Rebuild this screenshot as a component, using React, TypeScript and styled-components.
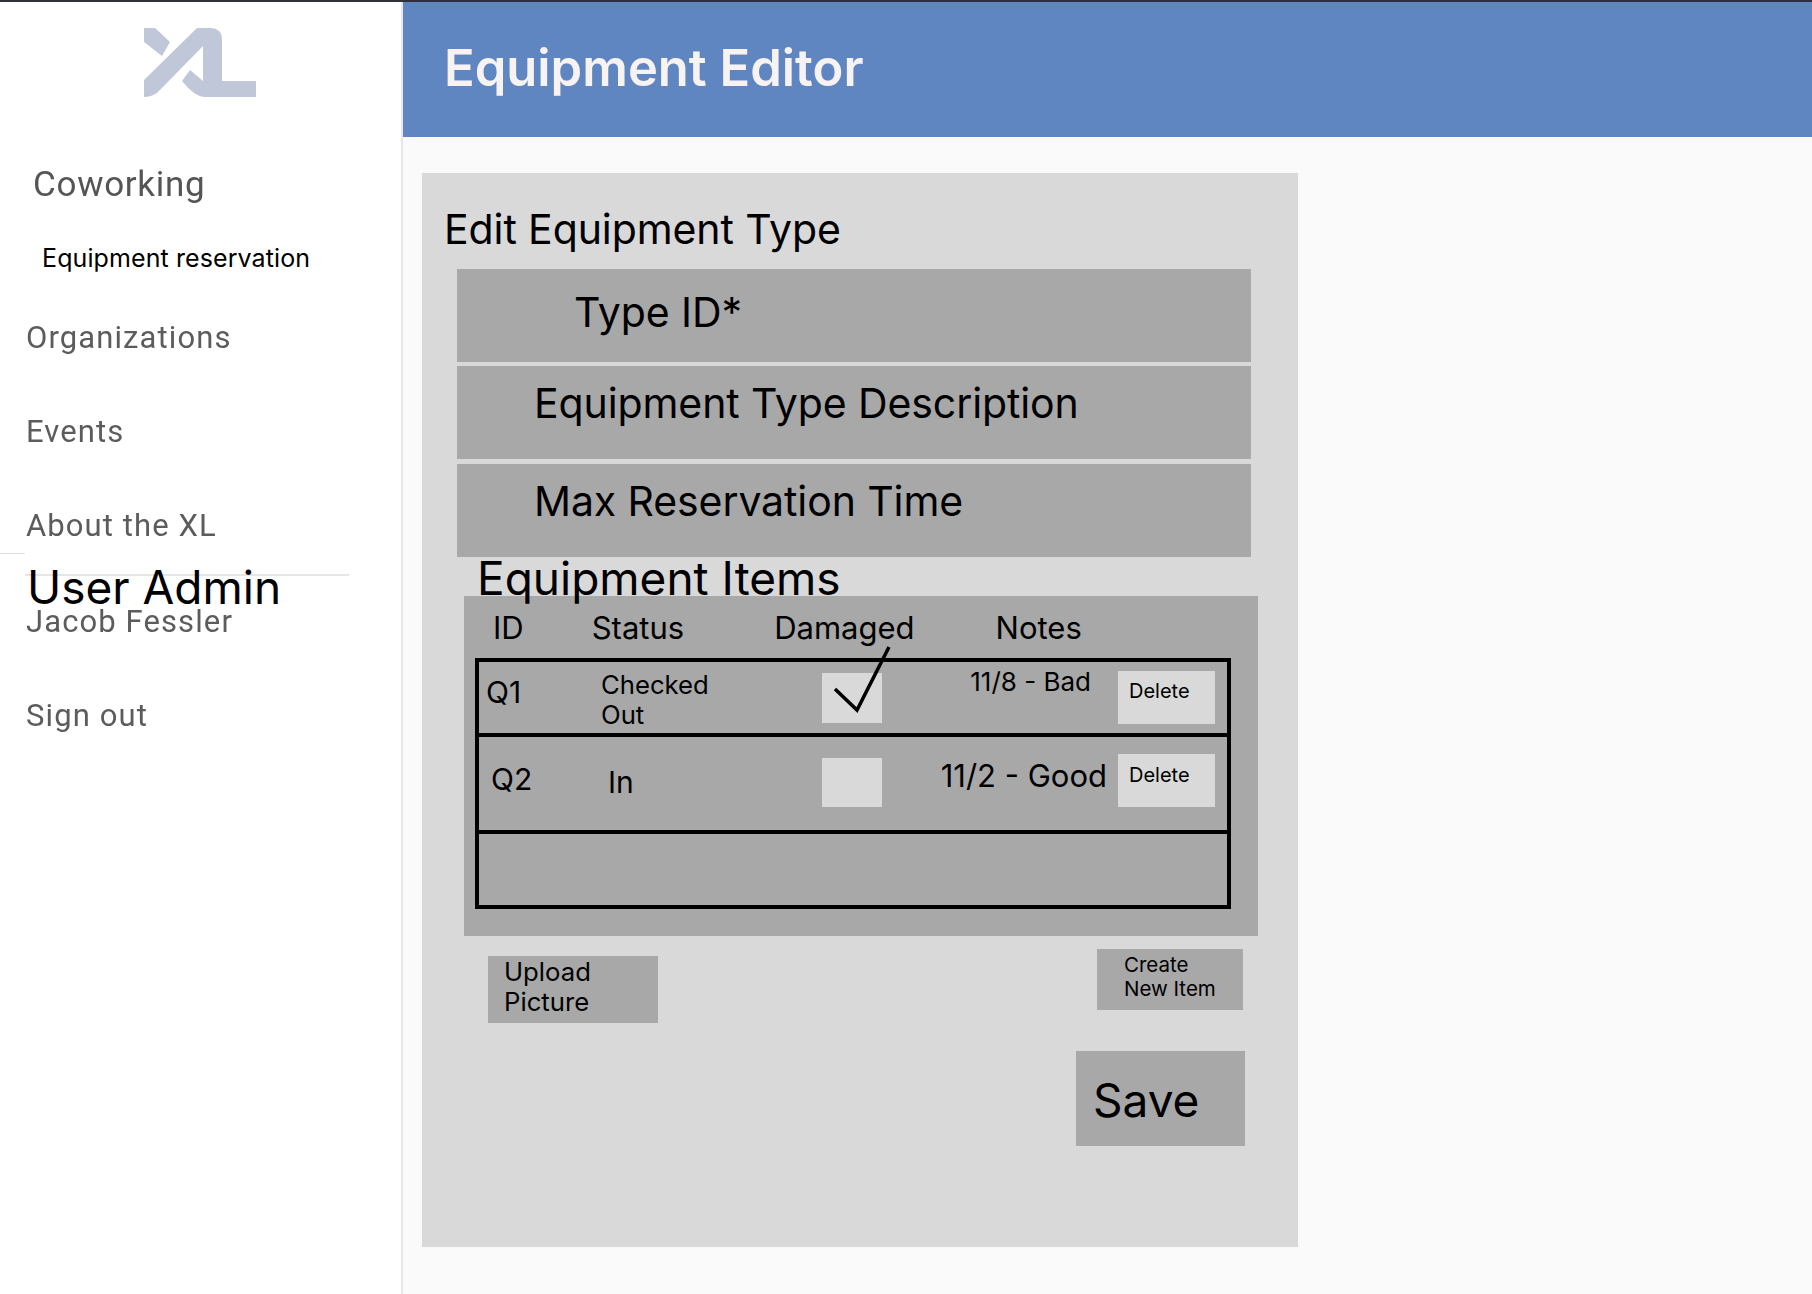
import * as React from "react";
import styled, { createGlobalStyle } from "styled-components";

const items = [
  { id: "Q1", status: "Checked Out", note: "11/8 - Bad", checked: true },
  { id: "Q2", status: "In", note: "11/2 - Good", checked: false },
];

const App = () => (
  <Page>
    <GlobalStyle />
    <Sidebar>
      <LogoWrap>
        <svg width="112" height="70" viewBox="0 0 112 70" fill="#c0c7d8">
          <path d="M0 0H11L26 14L18 28L0 14Z" />
          <path d="M0 52L53 0H66Q78 0 78 12V53H112V69H60Q50 68 38 53L46 42L59 53V18L13 65Q7 69 0 69Z" />
        </svg>
      </LogoWrap>
      <Heading>Coworking</Heading>
      <SubLink>Equipment reservation</SubLink>
      <NavItem>Organizations</NavItem>
      <NavItem>Events</NavItem>
      <NavItem>About the XL</NavItem>
      <NavItem $gap>Jacob Fessler</NavItem>
      <NavItem>Sign out</NavItem>
      <ShortRule />
      <LongRule />
      <RoleLabel>User Admin</RoleLabel>
    </Sidebar>
    <Main>
      <Header>Equipment Editor</Header>
      <Panel>
        <PanelTitle>Edit Equipment Type</PanelTitle>
        <Fields>
          <Field $indent={117} $top={19}>Type ID*</Field>
          <Field $indent={77} $top={13}>Equipment Type Description</Field>
          <Field $indent={77} $top={13}>Max Reservation Time</Field>
        </Fields>
        <ItemsTitle>Equipment Items</ItemsTitle>
        <ItemsBox>
          <ColumnHeads>
            <ColumnHead $left={18}>ID</ColumnHead>
            <ColumnHead $left={68}>Status</ColumnHead>
            <ColumnHead $left={90}>Damaged</ColumnHead>
            <ColumnHead $left={81}>Notes</ColumnHead>
          </ColumnHeads>
          <ItemsTable>
            {items.map((item, i) => (
              <ItemRow key={item.id} $first={i === 0}>
                <IdCell $first={i === 0}>{item.id}</IdCell>
                <StatusCell $first={i === 0}>{item.status}</StatusCell>
                <CheckBox $first={i === 0}>
                  {item.checked && (
                    <CheckMark width="60" height="72" viewBox="0 0 60 72" fill="none" stroke="#000" strokeWidth="3.5">
                      <path d="M13 42L35 63L67 0" />
                    </CheckMark>
                  )}
                </CheckBox>
                <NoteCell $first={i === 0}>{item.note}</NoteCell>
                <DeleteButton $first={i === 0}>Delete</DeleteButton>
              </ItemRow>
            ))}
            <EmptyRow />
          </ItemsTable>
        </ItemsBox>
        <ActionRow>
          <UploadButton>Upload Picture</UploadButton>
          <CreateButton>Create New Item</CreateButton>
        </ActionRow>
        <SaveRow>
          <SaveButton>Save</SaveButton>
        </SaveRow>
      </Panel>
    </Main>
  </Page>
);

const GlobalStyle = createGlobalStyle`
  html, body {
    margin: 0;
    padding: 0;
    background: #fff;
  }
  * {
    box-sizing: border-box;
  }
`;

const Page = styled.div`
  display: flex;
  width: 1812px;
  height: 1294px;
  overflow: hidden;
  border-top: 2px solid #2e3138;
  font-family: Inter, "Liberation Sans", sans-serif;
  color: #000;
`;

const Sidebar = styled.aside`
  position: relative;
  flex: 0 0 403px;
  background: #fff;
  border-right: 2px solid #e8e8e8;
`;

const LogoWrap = styled.div`
  display: flex;
  height: 137px;
  padding: 26px 0 0 144px;
`;

const Heading = styled.div`
  height: 84px;
  padding: 25px 0 0 33px;
  font-family: Roboto, sans-serif;
  font-size: 35px;
  font-weight: 400;
  line-height: 42px;
  letter-spacing: 0.7px;
  color: #555;
  filter: blur(0.6px);
`;

const SubLink = styled.div`
  height: 70px;
  padding: 19px 0 0 42px;
  font-size: 25px;
  line-height: 32px;
  letter-spacing: 0.1px;
`;

const NavItem = styled.div<{ $gap?: boolean }>`
  height: 94px;
  margin-top: ${(p) => (p.$gap ? "2px" : "0")};
  padding: 27px 0 0 26px;
  font-family: Roboto, sans-serif;
  font-size: 31px;
  font-weight: 400;
  line-height: 36px;
  letter-spacing: 1.1px;
  color: #5c5c5c;
  filter: blur(0.6px);
`;

const ShortRule = styled.div`
  position: absolute;
  top: 551px;
  left: 0;
  width: 25px;
  height: 1px;
  background: #e2e2e2;
`;

const LongRule = styled.div`
  position: absolute;
  top: 572px;
  left: 25px;
  width: 324px;
  height: 2px;
  background: #e6e6e6;
`;

const RoleLabel = styled.div`
  position: absolute;
  top: 558px;
  left: 27px;
  font-size: 46px;
  line-height: 54px;
  white-space: nowrap;
`;

const Main = styled.main`
  flex: 1;
  display: flex;
  flex-direction: column;
  background: #fafafa;
`;

const Header = styled.header`
  height: 135px;
  padding: 37px 0 0 41px;
  background: #5f86c1;
  color: #f8f3f3;
  font-size: 50.7px;
  font-weight: 600;
  line-height: 58px;
`;

const Panel = styled.section`
  width: 876px;
  height: 1074px;
  margin: 36px 0 0 19px;
  padding: 30px 0 0 22px;
  background: #d9d9d9;
`;

const PanelTitle = styled.h2`
  margin: 0;
  height: 66px;
  font-size: 41px;
  font-weight: 400;
  line-height: 52px;
  letter-spacing: -0.1px;
`;

const Fields = styled.div`
  display: flex;
  flex-direction: column;
  gap: 4px;
  width: 794px;
  margin-left: 13px;
`;

const Field = styled.div<{ $indent: number; $top: number }>`
  height: 93px;
  padding: ${(p) => p.$top}px 0 0 ${(p) => p.$indent}px;
  background: #a8a8a8;
  font-size: 41px;
  font-weight: 400;
  line-height: 48px;
  letter-spacing: -0.1px;

  &:last-child {
    margin-top: 1px;
  }
`;

const ItemsTitle = styled.h3`
  height: 39px;
  margin: 0;
  padding-left: 33px;
  font-size: 46px;
  font-weight: 400;
  line-height: 42px;
  white-space: nowrap;
`;

const ItemsBox = styled.div`
  width: 794px;
  height: 340px;
  margin-left: 20px;
  padding: 0 0 0 11px;
  background: #a8a8a8;
`;

const ColumnHeads = styled.div`
  display: flex;
  height: 62px;
  padding-top: 13px;
`;

const ColumnHead = styled.div<{ $left: number }>`
  margin-left: ${(p) => p.$left}px;
  font-size: 31px;
  line-height: 38px;
`;

const ItemsTable = styled.div`
  display: flex;
  flex-direction: column;
  width: 756px;
  height: 251px;
  border: 4px solid #000;
`;

const ItemRow = styled.div<{ $first: boolean }>`
  display: grid;
  grid-template-columns: 118px 225px 60px 236px 97px;
  height: ${(p) => (p.$first ? "75px" : "97px")};
  border-bottom: 4px solid #000;
`;

const EmptyRow = styled.div`
  flex: 1;
`;

const IdCell = styled.div<{ $first: boolean }>`
  padding: ${(p) => (p.$first ? "12px 0 0 7px" : "24px 0 0 12px")};
  font-size: 30px;
  line-height: 36px;
`;

const StatusCell = styled.div<{ $first: boolean }>`
  width: 140px;
  padding: ${(p) => (p.$first ? "8px 0 0 4px" : "27px 0 0 11px")};
  font-size: ${(p) => (p.$first ? "25.7px" : "30px")};
  line-height: ${(p) => (p.$first ? "30px" : "36px")};
`;

const CheckBox = styled.div<{ $first: boolean }>`
  position: relative;
  height: ${(p) => (p.$first ? "50px" : "49px")};
  margin-top: ${(p) => (p.$first ? "11px" : "21px")};
  background: #d9d9d9;
`;

const CheckMark = styled.svg`
  position: absolute;
  top: -26px;
  left: 0;
  overflow: visible;
`;

const NoteCell = styled.div<{ $first: boolean }>`
  padding: ${(p) => (p.$first ? "2px 27px 0 0" : "21px 11px 0 0")};
  text-align: right;
  white-space: nowrap;
  font-size: ${(p) => (p.$first ? "26px" : "31px")};
  line-height: 36px;
`;

const DeleteButton = styled.div<{ $first: boolean }>`
  height: 53px;
  margin-top: ${(p) => (p.$first ? "9px" : "17px")};
  padding: ${(p) => (p.$first ? "8px" : "9px")} 0 0 11px;
  background: #d9d9d9;
  font-size: 20px;
  line-height: 24px;
`;

const ActionRow = styled.div`
  display: flex;
  justify-content: space-between;
  align-items: flex-start;
  width: 755px;
  margin: 13px 0 0 44px;
`;

const UploadButton = styled.div`
  width: 170px;
  height: 67px;
  margin-top: 7px;
  padding: 0 0 6px 16px;
  background: #a8a8a8;
  font-size: 25.7px;
  line-height: 30px;
  display: flex;
  align-items: center;
`;

const CreateButton = styled.div`
  width: 146px;
  height: 61px;
  padding: 4px 20px 0 27px;
  background: #a8a8a8;
  font-size: 20.5px;
  line-height: 24px;
`;

const SaveRow = styled.div`
  display: flex;
  justify-content: flex-end;
  width: 801px;
  margin-top: 28px;
`;

const SaveButton = styled.div`
  width: 169px;
  height: 95px;
  padding: 22px 0 0 17px;
  background: #a8a8a8;
  font-size: 46px;
  line-height: 54px;
`;

export default App;
